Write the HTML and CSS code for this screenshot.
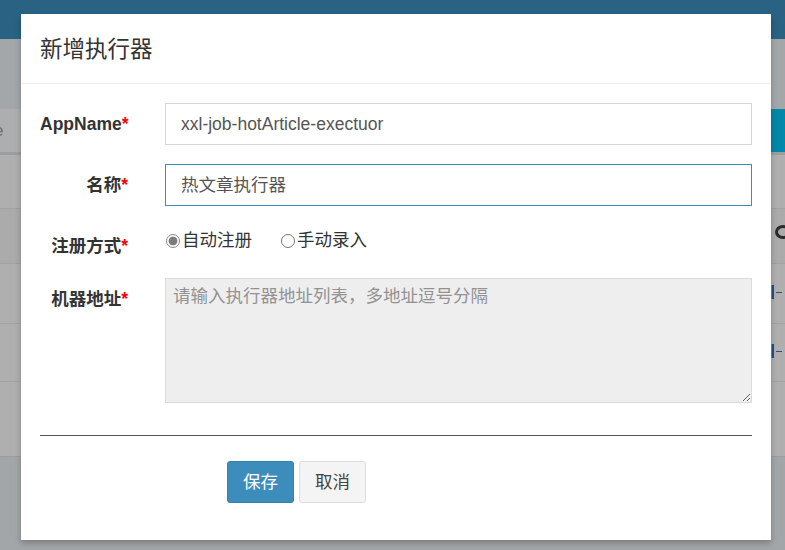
FILE: index.html
```html
<!DOCTYPE html>
<html lang="zh-CN">
<head>
<meta charset="utf-8">
<title>新增执行器</title>
<link rel="stylesheet" href="styles.css">
</head>
<body>
<div class="page">
  <div class="topbar"></div>
  <div class="content-head"></div>
  <div class="search-row">
    <span class="search-text">e</span>
    <span class="search-btn"></span>
  </div>
  <div class="table">
    <div class="trow r1"></div>
    <div class="trow r2"><span class="mark arc"></span></div>
    <div class="trow r3"><span class="mark bar"></span></div>
    <div class="trow r4"><span class="mark bar"></span></div>
    <div class="trow r5"></div>
  </div>
  <div class="footer-area"></div>

  <div class="modal">
    <div class="modal-header">
      <h4 class="modal-title">新增执行器</h4>
    </div>
    <div class="modal-body">
      <div class="form-row">
        <label class="control-label">AppName<span class="req">*</span></label>
        <div class="field"><div class="input">xxl-job-hotArticle-exectuor</div></div>
      </div>
      <div class="form-row">
        <label class="control-label">名称<span class="req">*</span></label>
        <div class="field"><div class="input focus">热文章执行器</div></div>
      </div>
      <div class="form-row radio-row">
        <label class="control-label">注册方式<span class="req">*</span></label>
        <div class="field radios">
          <span class="radio"><span class="dot checked"></span>自动注册</span>
          <span class="radio"><span class="dot"></span>手动录入</span>
        </div>
      </div>
      <div class="form-row">
        <label class="control-label">机器地址<span class="req">*</span></label>
        <div class="field"><textarea class="textarea" placeholder="请输入执行器地址列表，多地址逗号分隔"></textarea></div>
      </div>
      <hr class="divider">
      <div class="actions">
        <button class="btn btn-primary">保存</button>
        <button class="btn btn-default">取消</button>
      </div>
    </div>
  </div>
</div>
</body>
</html>
```
FILE: styles.css
```css
* { box-sizing: border-box; }
html, body { margin: 0; padding: 0; }
body {
  width: 785px;
  height: 550px;
  overflow: hidden;
  font-family: "Liberation Sans", "Noto Sans CJK SC", sans-serif;
  background: #a3a6a9;
}
.page {
  position: relative;
  width: 785px;
  height: 550px;
  display: flex;
  flex-direction: column;
}
.topbar { height: 39px; background: #296283; flex: none; }
.content-head { height: 70px; background: #a4a7a9; flex: none; }
.search-row {
  height: 46px;
  flex: none;
  background: #adaeb0;
  border-bottom: 3px solid #9c9d9f;
  display: flex;
  align-items: flex-start;
  justify-content: space-between;
}
.search-text {
  margin-left: -6px;
  margin-top: 12px;
  font-size: 17px;
  color: #6b6d70;
}
.search-btn {
  width: 60px;
  height: 43px;
  background: #0088a8;
}
.table { flex: none; background: #afafaf; }
.trow {
  border-bottom: 1px solid #a3a3a3;
  display: flex;
  justify-content: flex-end;
  align-items: center;
}
.r1 { height: 54px; }
.r2 { height: 55px; background: #ababab; }
.r3 { height: 60px; }
.r4 { height: 58px; }
.r5 { height: 75px; border-bottom: 1px solid #9d9d9d; }
.mark { display: block; flex: none; }
.mark.arc {
  width: 16px;
  height: 14px;
  margin-right: -6px;
  margin-top: -8px;
  border: 3px solid #2b2b2b;
  border-left-color: transparent;
  border-radius: 50%;
  transform: rotate(180deg);
}
.mark.bar {
  width: 14px;
  height: 14px;
  margin-right: -1px;
  margin-top: -4px;
  border-left: 2px solid #2d4e86;
  box-shadow: -1px 0 0 #b07a3a;
  background: linear-gradient(#2d4e86, #2d4e86) 2px 7px / 6px 1px no-repeat;
}
.footer-area { flex: 1; background: #a3a6a9; }

.modal {
  position: absolute;
  left: 21px;
  top: 14px;
  width: 750px;
  height: 526px;
  background: #fff;
  box-shadow: 0 3px 6px rgba(0,0,0,0.25);
  display: flex;
  flex-direction: column;
}
.modal-header {
  height: 70px;
  padding: 21px 19px 0;
  border-bottom: 1px solid #eeeeee;
}
.modal-title {
  margin: 0;
  font-weight: normal;
  font-size: 22.5px;
  line-height: 30px;
  color: #333;
}
.modal-body {
  padding: 19px 19px 0;
  display: flex;
  flex-direction: column;
  gap: 19px;
}
.form-row {
  display: grid;
  grid-template-columns: 88px 587px;
  column-gap: 37px;
  align-items: start;
}
.control-label {
  text-align: right;
  font-weight: bold;
  font-size: 17.5px;
  line-height: 25px;
  padding-top: 9px;
  color: #333;
  white-space: nowrap;
}
.req { color: #ff0000; }
.input {
  height: 42px;
  border: 1px solid #d2d6de;
  padding: 0 15px;
  font-size: 17.5px;
  line-height: 40px;
  color: #555;
}
.input.focus { border-color: #3c8dbc; }
.radio-row { height: 34px; }
.radios {
  display: flex;
  gap: 28px;
  padding-top: 3px;
}
.radio {
  display: inline-flex;
  align-items: center;
  font-size: 17.5px;
  line-height: 25px;
  color: #333;
}
.dot {
  width: 14px;
  height: 14px;
  border: 1px solid #767676;
  border-radius: 50%;
  margin: 0 2px 0 1px;
  display: inline-block;
  background: #fff;
}
.dot.checked {
  border: 1px solid #8a8a8a;
  background: radial-gradient(circle, #7c7c7c 0 4px, #fff 4.8px);
}
.textarea {
  display: block;
  width: 587px;
  height: 125px;
  margin: 0;
  background: #eeeeee;
  border: 1px solid #dcdcdc;
  border-radius: 0;
  padding: 5px 7px;
  font-family: "Liberation Sans", "Noto Sans CJK SC", sans-serif;
  font-size: 17.5px;
  line-height: 25px;
  color: #555;
  resize: both;
  outline: none;
}
.textarea::placeholder { color: #929292; }
.divider {
  margin: 13px 0 0;
  border: 0;
  border-top: 1px solid #555;
  height: 0;
}
.actions {
  display: flex;
  gap: 5px;
  margin-top: 6px;
  padding-left: 187px;
}
.btn {
  width: 67px;
  height: 42px;
  border-radius: 3px;
  font-family: "Liberation Sans", "Noto Sans CJK SC", sans-serif;
  font-size: 17.5px;
  padding: 0;
  line-height: 40px;
}
.btn-primary {
  background: #3c8dbc;
  border: 1px solid #367fa9;
  color: #fff;
}
.btn-default {
  background: #f4f4f4;
  border: 1px solid #dddddd;
  color: #444;
}
```
